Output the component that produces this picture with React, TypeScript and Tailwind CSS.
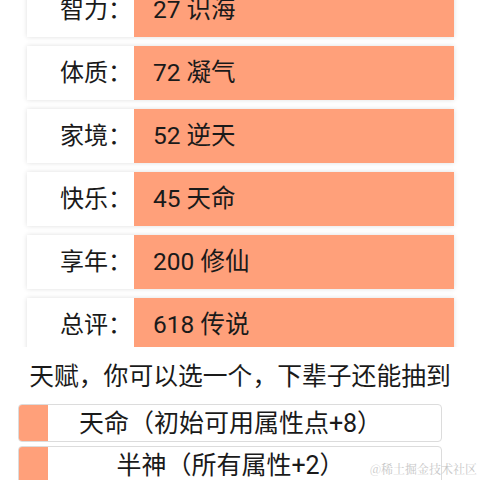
const stats = [
  { label: "智力：", value: "27 识海" },
  { label: "体质：", value: "72 凝气" },
  { label: "家境：", value: "52 逆天" },
  { label: "快乐：", value: "45 天命" },
  { label: "享年：", value: "200 修仙" },
  { label: "总评：", value: "618 传说" },
];

const talents = ["天命（初始可用属性点+8）", "半神（所有属性+2）"];

export default function App() {
  return (
    <div
      className="relative h-[480px] w-[480px] overflow-hidden bg-white text-[#1a1a1a]"
      style={{ fontFamily: 'Roboto, "Noto Sans CJK SC", sans-serif' }}
    >
      {/* scrolled stat list, clipped at the bottom */}
      <div className="h-[347px] overflow-hidden">
        <div className="-mt-[17px] flex flex-col gap-[9px] pl-[27px] pr-[26px]">
          {stats.map((s) => (
            <div
              key={s.label}
              className="flex h-[54px] shrink-0 bg-white shadow-[0_0_5px_rgba(0,0,0,0.13)]"
            >
              <div className="flex w-[107px] items-center justify-end pr-[2px] text-[24px] leading-none">
                {s.label}
              </div>
              <div className="flex flex-1 items-center bg-[#ffa07a] pl-[19px] text-[24.5px] leading-none">
                {s.value}
              </div>
            </div>
          ))}
        </div>
      </div>

      <div className="flex h-[57px] items-center justify-center pt-[4px] text-[24.8px] leading-none">
        天赋，你可以选一个，下辈子还能抽到
      </div>

      <div className="flex flex-col gap-[4px] pl-[18px] pr-[38px]">
        {talents.map((t) => (
          <div
            key={t}
            className="flex h-[38px] shrink-0 overflow-hidden rounded-[4px] border border-[#dcdcdc] bg-white"
          >
            <div className="-my-px -ml-px w-[30px] shrink-0 rounded-l-[4px] bg-[#ffa07a]" />
            <div className="flex flex-1 items-center justify-center pr-[28px] text-[25px] leading-none">
              {t}
            </div>
          </div>
        ))}
      </div>

      <div
        className="absolute bottom-[5px] right-[3px] text-[12px] leading-none text-[#c8c8c8]"
        style={{ fontFamily: '"Noto Serif CJK SC", "Noto Sans CJK SC", serif' }}
      >
        @稀土掘金技术社区
      </div>
    </div>
  );
}
